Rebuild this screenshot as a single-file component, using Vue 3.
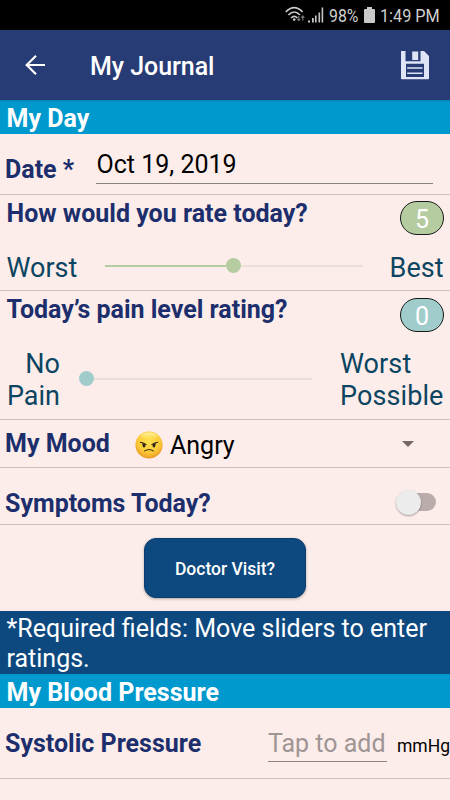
<script setup>
import { ref } from 'vue'

const dayRating = ref(5)
const painRating = ref(0)
const symptoms = ref(false)
</script>

<template>
  <div class="screen">
    <div class="status">
      <svg class="wifi" width="22" height="18" viewBox="0 0 22 18">
        <g fill="none" stroke="#c9c9c9" stroke-width="1.7">
          <path d="M.8 6Q9.200 -2.600 17.600 6" />
          <path d="M3.400 9Q9.200 3 15 9" />
          <path d="M6 12Q9.200 8.800 12.400 12" />
        </g>
        <circle cx="9.200" cy="13.600" r="1.300" fill="#c9c9c9" />
        <path d="M13.800 10v4.500M12.300 12.800l1.500 1.900 1.500-1.900M17.800 14.700v-4.500M16.300 11.900l1.500-1.900 1.500 1.900" fill="none" stroke="#777" stroke-width="1.100" />
      </svg>
      <svg class="signal" width="16" height="16" viewBox="0 0 16 16" fill="#c4c4c4">
        <path d="M0 13.500h2V15.500H0zM4 11h1.800v4.500H4zM7 8.500h1.600v7H7zM10.500 5.500h1.600v10h-1.600zM13.600 .5h1.600v15h-1.600z" />
      </svg>
      <span class="percent">98%</span>
      <svg class="battery" width="11" height="17" viewBox="0 0 11 17">
        <path d="M3 0h5v2h2q1 0 1 1v12q0 1-1 1H1q-1 0-1-1V3q0-1 1-1h2z" fill="#c9c9c9" />
      </svg>
      <span class="clock">1:49 PM</span>
    </div>

    <header class="appbar">
      <svg class="back" width="22" height="22" viewBox="0 0 22 22">
        <path d="M20 11H2M11 1.700L1.700 11l9.300 9.300" fill="none" stroke="#fff" stroke-width="2.200" />
      </svg>
      <h1 class="title">My Journal</h1>
      <svg class="save" width="30" height="30" viewBox="0 0 30 30">
        <path fill="#dfe5f7" fill-rule="evenodd" d="M1 1h4.500v10.200h15V1H24L29 6V28.500q0 .8-.8 .8H1.800q-.8 0-.8-.8zM6 13.700v13.300h18V13.700z" />
        <path fill="#dfe5f7" d="M12.200 1.500h6v8.500h-6z" />
        <path d="M7.200 18h15.300M7.200 23.200h15.300" stroke="#dfe5f7" stroke-width="1.400" />
      </svg>
    </header>

    <h2 class="section day">My Day</h2>

    <div class="row date-row">
      <span class="label date-label">Date *</span>
      <div class="date-field">Oct 19, 2019</div>
    </div>

    <div class="row rating-row">
      <div class="question">
        <span class="label">How would you rate today?</span>
        <span class="badge green">{{ dayRating }}</span>
      </div>
      <div class="scale day-scale">
        <span class="end worst">Worst</span>
        <div class="slider day-slider">
          <div class="fill"></div>
          <div class="knob"></div>
          <div class="rest"></div>
        </div>
        <span class="end best">Best</span>
      </div>
    </div>

    <div class="row pain-row">
      <div class="question">
        <span class="label">Today’s pain level rating?</span>
        <span class="badge teal">{{ painRating }}</span>
      </div>
      <div class="scale pain-scale">
        <span class="end no-pain">No<br />Pain</span>
        <div class="slider pain-slider">
          <div class="knob"></div>
          <div class="rest"></div>
        </div>
        <span class="end possible">Worst<br />Possible</span>
      </div>
    </div>

    <div class="row mood-row">
      <span class="label mood-label">My Mood</span>
      <svg class="emoji" width="28" height="28" viewBox="0 0 28 28">
        <defs>
          <radialGradient id="face" cx=".5" cy=".38" r=".68">
            <stop offset="0" stop-color="#ffe04e" />
            <stop offset=".6" stop-color="#fcc937" />
            <stop offset="1" stop-color="#e28a22" />
          </radialGradient>
          <linearGradient id="shine" x1="0" y1="0" x2="0" y2="1">
            <stop offset="0" stop-color="#fff5a8" />
            <stop offset="1" stop-color="#ffe45c" stop-opacity="0" />
          </linearGradient>
        </defs>
        <circle cx="14" cy="14" r="13.600" fill="url(#face)" />
        <ellipse cx="14" cy="5.500" rx="8.500" ry="4" fill="url(#shine)" />
        <g fill="none" stroke="#2b2116" stroke-width="1" stroke-linecap="round">
          <path d="M5.300 11.300Q8.300 11.500 11.300 13.500M22.700 11.300Q19.700 11.500 16.700 13.500" />
          <path d="M9.500 20Q14 17 18.500 20" />
        </g>
        <path fill="#2b2116" d="M7.300 11.700l3.300 1.700q-.1 3-1.600 3t-1.700-4.700zM20.700 11.700l-3.300 1.700q.1 3 1.600 3t1.700-4.700z" />
      </svg>
      <span class="mood">Angry</span>
      <svg class="caret" width="12" height="6" viewBox="0 0 12 6">
        <path d="M0 0h12L6 6z" fill="#746968" />
      </svg>
    </div>

    <div class="row symptoms-row">
      <span class="label">Symptoms Today?</span>
      <button class="switch" role="switch" :aria-checked="symptoms" @click="symptoms = !symptoms">
        <span class="thumb"></span>
      </button>
    </div>

    <div class="action">
      <button class="visit">Doctor Visit?</button>
    </div>

    <p class="note">*Required fields: Move sliders to enter ratings.</p>

    <h2 class="section">My Blood Pressure</h2>

    <div class="row pressure-row">
      <span class="label pressure-label">Systolic Pressure</span>
      <div class="value-field">Tap to add</div>
      <span class="unit">mmHg</span>
    </div>
  </div>
</template>

<style>
body {
  margin: 0;
  background: #fcedea;
}
</style>

<style scoped>
.screen {
  width: 450px;
  height: 800px;
  overflow: hidden;
  background: #fcedea;
  font-family: Roboto, "Liberation Sans", sans-serif;
  font-size: 25px;
  line-height: 30px;
  color: #000;
}
.screen * {
  box-sizing: border-box;
}
.screen span,
.screen div,
.screen h1 {
  white-space: nowrap;
}
svg {
  display: block;
  flex: none;
}
.status {
  height: 30px;
  background: #000;
  display: flex;
  align-items: flex-start;
  padding-left: 285px;
  color: #cfcfcf;
  font-size: 18px;
  line-height: 30px;
}
.wifi {
  margin-top: 6px;
}
.signal {
  margin: 7px 0 0 1px;
}
.percent {
  width: 30px;
  margin-left: 5px;
  padding-top: 1px;
  transform: scaleX(.88);
  transform-origin: 0 0;
}
.battery {
  margin: 7px 0 0 5px;
}
.clock {
  margin-left: 5px;
  padding-top: 1px;
  transform: scaleX(.9);
  transform-origin: 0 0;
}
.appbar {
  height: 70px;
  background: #273b74;
  display: flex;
  align-items: center;
  padding: 0 20px 0 25px;
}
.title {
  margin: 4px 0 0 43px;
  font-size: 25px;
  font-weight: 500;
  line-height: 30px;
  letter-spacing: -.05px;
  color: #fff;
}
.save {
  margin-left: auto;
}
.section {
  height: 34px;
  margin: 0;
  padding: 4px 6.500px 0;
  background: #0099cd;
  color: #fff;
  font-size: 25px;
  font-weight: 700;
  line-height: 30px;
}
.day {
  box-shadow: inset 0 2px 2px -1px #0a7fb0;
}
.row {
  border-bottom: 1px solid #cdc1bf;
}
.label {
  color: #1c2f6c;
  font-weight: 700;
}
.date-row {
  height: 61px;
  display: flex;
  padding: 0 17px 0 5px;
}
.date-label {
  width: 91px;
  padding-top: 21px;
}
.date-field {
  flex: 1;
  height: 50px;
  padding: 16px 0 0 .5px;
  border-bottom: 1px solid #8a8281;
}
.rating-row {
  height: 96px;
}
.question {
  height: 44px;
  display: flex;
  justify-content: space-between;
  padding: 4px 6px 0 6.500px;
}
.badge {
  width: 44px;
  height: 34px;
  margin-top: 2px;
  border: 1px solid #161a18;
  border-radius: 17px;
  color: #fff;
  text-align: center;
  line-height: 35px;
}
.green {
  background: #b5cba0;
}
.teal {
  margin-top: 3px;
  background: #a0cccb;
}
.scale {
  display: flex;
  padding: 0 6.500px;
}
.end {
  font-size: 27px;
  line-height: 32px;
  color: #0b4561;
}
.day-scale {
  padding-top: 13px;
}
.worst {
  width: 98.500px;
}
.slider {
  display: flex;
  align-items: center;
}
.day-slider {
  width: 258px;
  height: 27px;
}
.fill {
  width: 121px;
  height: 2px;
  background: #b5cba0;
}
.knob {
  width: 15px;
  height: 15px;
  border-radius: 50%;
  background: #b5cba0;
}
.rest {
  flex: 1;
  height: 2px;
  background: #eae0d8;
}
.best {
  margin-left: auto;
}
.pain-row {
  height: 129px;
}
.pain-scale {
  padding-top: 13px;
}
.no-pain {
  width: 53.500px;
  text-align: right;
}
.pain-slider {
  width: 233px;
  height: 61px;
  margin-left: 19px;
}
.pain-slider .knob {
  background: #a0cccb;
}
.pain-slider .rest {
  background: #e7dedc;
}
.possible {
  margin-left: auto;
  letter-spacing: .1px;
}
.mood-row {
  height: 48px;
  display: flex;
  align-items: flex-start;
  padding-left: 5px;
}
.mood-label {
  width: 130px;
  padding-top: 9px;
}
.emoji {
  margin-top: 11px;
}
.mood {
  width: 239px;
  padding: 11px 0 0 7px;
}
.caret {
  margin-top: 21px;
}
.symptoms-row {
  height: 57px;
  display: flex;
  align-items: flex-start;
  padding: 21px 14px 0 5px;
}
.switch {
  width: 40px;
  height: 26px;
  margin-left: auto;
  padding: 0;
  border: 0;
  background: none;
  display: flex;
  align-items: center;
}
.switch::after {
  content: "";
  width: 22px;
  height: 18px;
  margin-left: -7px;
  border-radius: 0 9px 9px 0;
  background: #b9acab;
}
.thumb {
  position: relative;
  z-index: 1;
  flex: none;
  width: 25px;
  height: 25px;
  border-radius: 50%;
  background: #ececec;
  box-shadow: 0 1px 2px rgba(0, 0, 0, .35);
}
.action {
  height: 86px;
  display: flex;
  justify-content: center;
  padding-top: 13px;
}
.visit {
  width: 162px;
  height: 60px;
  border: 1px solid #083c73;
  border-radius: 12px;
  background: #0d497f;
  box-shadow: 0 1px 3px rgba(0, 0, 0, .3);
  color: #fff;
  font: 500 17.500px/30px Roboto, "Liberation Sans", sans-serif;
  padding: 2px 0 0;
}
.note {
  height: 63px;
  margin: 0;
  padding: 3px 6.500px 0;
  background: #0d497f;
  color: #fff;
  font-size: 25px;
  line-height: 30px;
}
.pressure-row {
  height: 71px;
  display: flex;
  align-items: flex-start;
  padding-left: 5px;
}
.pressure-label {
  width: 263px;
  padding-top: 21px;
}
.value-field {
  width: 119px;
  height: 54px;
  padding-top: 21px;
  border-bottom: 1px solid #8f8584;
  color: #9f9594;
}
.unit {
  margin-left: 10px;
  padding-top: 23px;
  font-size: 17.500px;
}
</style>
